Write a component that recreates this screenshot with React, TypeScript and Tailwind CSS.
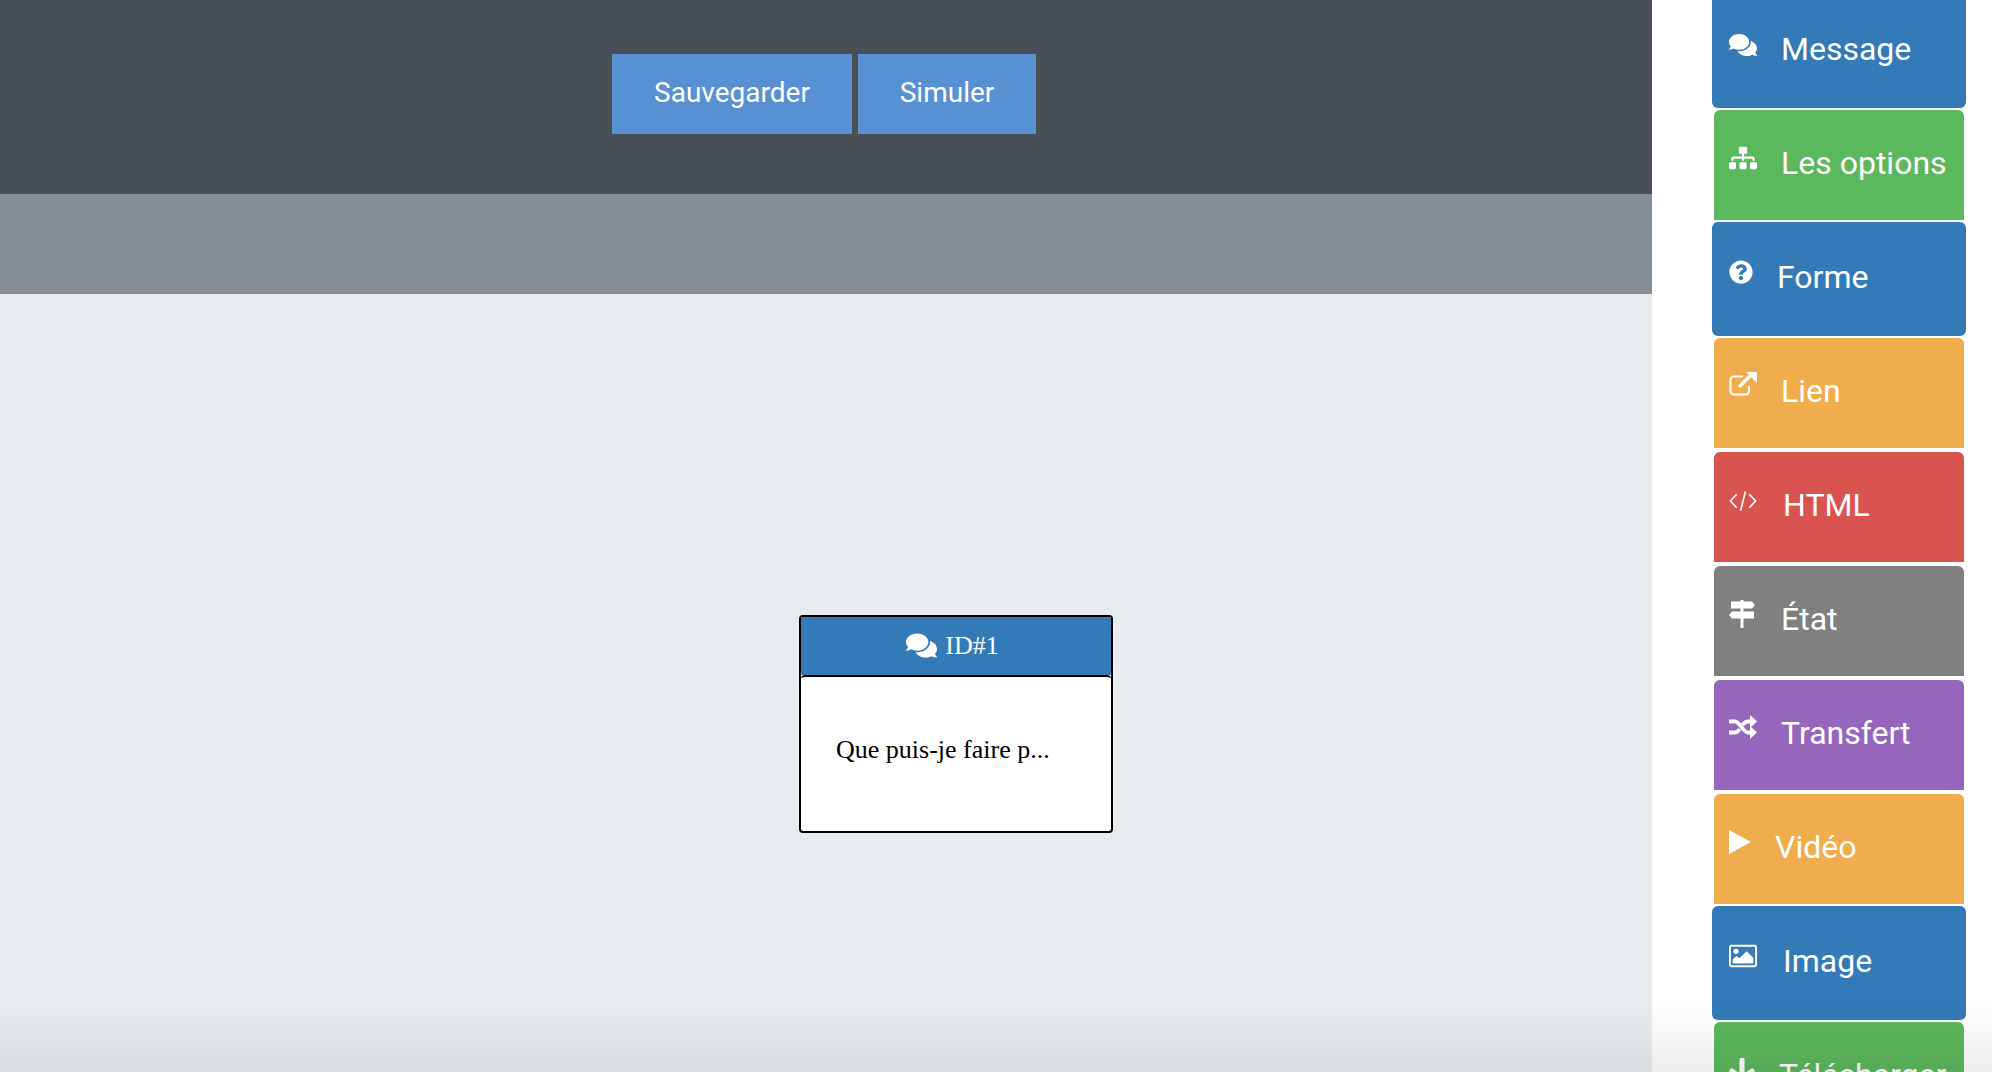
import { FaComments, FaSitemap, FaQuestionCircle } from "react-icons/fa";
import type { ReactNode } from "react";

const ExternalLink = () => (
  <svg viewBox="0 0 28 24" className="w-[28px] h-[24px]" fill="none" stroke="currentColor">
    <path d="M20 14v5a3.500 3.500 0 0 1-3.500 3.500H5A3.500 3.500 0 0 1 1.500 19V8A3.500 3.500 0 0 1 5 4.500h9" strokeWidth="2" />
    <path d="M10 15 L21 4" strokeWidth="3.500" />
    <path d="M17 0 H28 V11 Z" fill="currentColor" stroke="none" />
  </svg>
);

const CodeIcon = () => (
  <svg viewBox="0 0 29 22" className="w-[29px] h-[22px]" fill="none" stroke="currentColor" strokeWidth="1.800">
    <path d="M8 4 L1.500 11 L8 18" />
    <path d="M21 4 L27.500 11 L21 18" />
    <path d="M17 1 L12 21" />
  </svg>
);

const SignsIcon = () => (
  <svg viewBox="0 0 26 28" className="w-[26px] h-[28px]" fill="currentColor">
    <path d="M2 1.500H23L26 5L23 8.500H2Z" />
    <path d="M0 15L3 11.500H25V18.500H3Z" />
    <rect x="11.500" y="0" width="3" height="2" />
    <rect x="11.500" y="8" width="3" height="4" />
    <rect x="11.500" y="18" width="3" height="10" />
  </svg>
);

const ShuffleIcon = () => (
  <svg viewBox="0 0 28 24" className="w-[28px] h-[24px]" fill="none" stroke="currentColor" strokeWidth="3.800">
    <path d="M0 6.500H6C11 6.500 14 17.500 19 17.500H23" />
    <path d="M0 17.500H6C8 17.500 9.500 16 10.500 14M13.500 10C15 8 16.500 6.500 19 6.500H23" />
    <path d="M21 0L28 6.500L21 13Z" fill="currentColor" stroke="none" />
    <path d="M21 11L28 17.500L21 24Z" fill="currentColor" stroke="none" />
  </svg>
);

const PlayIcon = () => (
  <svg viewBox="0 0 22 24" className="w-[22px] h-[24px]" fill="currentColor">
    <path d="M0 0L22 12L0 24Z" />
  </svg>
);

const ImageIcon = () => (
  <svg viewBox="0 0 30 24" className="w-[30px] h-[24px]">
    <rect x="1" y="1" width="28" height="22" rx="1.500" fill="none" stroke="currentColor" strokeWidth="2" />
    <circle cx="7.500" cy="7" r="2.800" fill="currentColor" />
    <path d="M4 20V15.500L8 12L11 14.500L19 7L26 14V20Z" fill="currentColor" />
  </svg>
);

const SproutIcon = () => (
  <svg viewBox="0 0 26 28" className="w-[26px] h-[28px]" fill="none" stroke="currentColor" strokeLinecap="round">
    <path d="M13 2V24" strokeWidth="5" />
    <path d="M3 13C6 15 9 17 11 21" strokeWidth="5" />
    <path d="M23 13C20 15 17 17 15 21" strokeWidth="5" />
  </svg>
);

type Item = {
  label: string;
  bg: string;
  icon: ReactNode;
  iconPt: string;
  textPt: string;
  gap: string;
  box: string;
  mb: string;
};

const blue = "w-[254px] h-[114px] rounded-[6px]";
const narrowOpen = "w-[250px] h-[110px] rounded-t-[6px]";

const items: Item[] = [
  { label: "Message", bg: "bg-[#337ab7]", icon: <FaComments size={28} />, iconPt: "pt-[37px]", textPt: "pt-[33px]", gap: "w-[24px]", box: `${blue} -mt-[6px]`, mb: "mb-[2px]" },
  { label: "Les options", bg: "bg-[#5cb85c]", icon: <FaSitemap size={28} />, iconPt: "pt-[34px]", textPt: "pt-[31px]", gap: "w-[24px]", box: narrowOpen, mb: "mb-[2px]" },
  { label: "Forme", bg: "bg-[#337ab7]", icon: <FaQuestionCircle size={24} />, iconPt: "pt-[38px]", textPt: "pt-[33px]", gap: "w-[20px]", box: blue, mb: "mb-[2px]" },
  { label: "Lien", bg: "bg-[#f0ad4e]", icon: <ExternalLink />, iconPt: "pt-[34px]", textPt: "pt-[31px]", gap: "w-[24px]", box: narrowOpen, mb: "mb-[4px]" },
  { label: "HTML", bg: "bg-[#d9534f]", icon: <CodeIcon />, iconPt: "pt-[38px]", textPt: "pt-[31px]", gap: "w-[26px]", box: narrowOpen, mb: "mb-[4px]" },
  { label: "État", bg: "bg-[#808080]", icon: <SignsIcon />, iconPt: "pt-[34px]", textPt: "pt-[31px]", gap: "w-[24px]", box: narrowOpen, mb: "mb-[4px]" },
  { label: "Transfert", bg: "bg-[#9467bd]", icon: <ShuffleIcon />, iconPt: "pt-[35px]", textPt: "pt-[31px]", gap: "w-[24px]", box: narrowOpen, mb: "mb-[4px]" },
  { label: "Vidéo", bg: "bg-[#f0ad4e]", icon: <PlayIcon />, iconPt: "pt-[36px]", textPt: "pt-[31px]", gap: "w-[18px]", box: narrowOpen, mb: "mb-[2px]" },
  { label: "Image", bg: "bg-[#337ab7]", icon: <ImageIcon />, iconPt: "pt-[38px]", textPt: "pt-[33px]", gap: "w-[26px]", box: blue, mb: "mb-[2px]" },
  { label: "Télécharger", bg: "bg-[#5cb85c]", icon: <SproutIcon />, iconPt: "pt-[36px]", textPt: "pt-[31px]", gap: "w-[22px]", box: narrowOpen, mb: "mb-[4px]" },
];

function SideButton({ item }: { item: Item }) {
  const isBlue = item.box.includes("w-[254px]");
  return (
    <div className={`${item.bg} ${item.box} ${item.mb} shrink-0 text-white flex items-start ${isBlue ? "pl-[17px]" : "pl-[15px]"}`}>
      <div className={`${item.iconPt} w-[28px] flex shrink-0`}>{item.icon}</div>
      <div className={`${item.gap} shrink-0`} />
      <span className={`${item.textPt} text-[32px] font-[450] leading-[45px] whitespace-nowrap`}>{item.label}</span>
    </div>
  );
}

export default function App() {
  return (
    <div className="relative w-[1992px] h-[1072px] overflow-hidden flex bg-white font-['Roboto',sans-serif]">
      <div className="w-[1652px] h-full flex flex-col shrink-0">
        <header className="h-[194px] bg-[#495057] flex items-start pt-[54px] pl-[612px] gap-[6px] shrink-0">
          <button className="w-[240px] h-[80px] bg-[#5891d2] text-white text-[28px] font-[450] pb-[2px]">Sauvegarder</button>
          <button className="w-[178px] h-[80px] bg-[#5891d2] text-white text-[28px] font-[450] pb-[2px]">Simuler</button>
        </header>
        <div className="h-[100px] bg-[#868e96] shrink-0" />
        <main className="flex-1 bg-[#e9ecef] pt-[321px] pl-[799px]">
          <div className="w-[314px] h-[218px] border-2 border-black rounded-[4px] bg-white overflow-hidden font-['Liberation_Serif',serif] flex flex-col">
            <div className="h-[58px] bg-[#337ab7] text-white flex items-center justify-center gap-[8px] text-[26px] pr-[7px] pb-[2px] shrink-0">
              <FaComments size={31} />
              <span>ID#1</span>
            </div>
            <div className="border-t-2 border-black rounded-t-[4px] flex-1 pl-[35px] pt-[54px] text-black text-[26px] leading-[38px]">
              Que puis-je faire p...
            </div>
          </div>
        </main>
      </div>
      <aside className="flex-1 flex flex-col items-center pl-[34px]">
        {items.map((it) => (
          <SideButton key={it.label} item={it} />
        ))}
      </aside>
      <div className="absolute left-0 right-0 bottom-0 h-[72px] bg-gradient-to-b from-transparent to-[#00000012] pointer-events-none" />
    </div>
  );
}
